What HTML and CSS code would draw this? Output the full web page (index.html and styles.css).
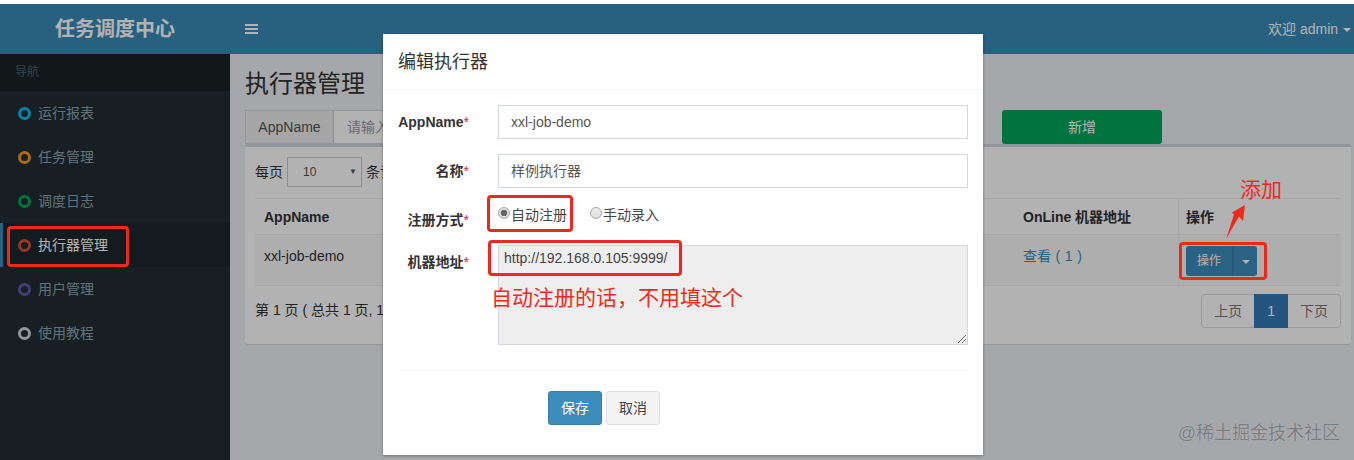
FILE: index.html
```html
<!DOCTYPE html>
<html lang="zh-CN">
<head>
<meta charset="utf-8">
<title>执行器管理</title>
<link rel="stylesheet" href="styles.css">
</head>
<body>
<div class="app">
  <header class="topbar">
    <div class="logo">任务调度中心</div>
    <div class="nav">
      <span class="burger"><i></i><i></i><i></i></span>
      <span class="user">欢迎 admin <b class="caret"></b></span>
    </div>
  </header>
  <div class="main">
    <aside class="side">
      <div class="side-head">导航</div>
      <ul class="menu">
        <li><span class="ring r-blue"></span>运行报表</li>
        <li><span class="ring r-orange"></span>任务管理</li>
        <li><span class="ring r-green"></span>调度日志</li>
        <li class="on"><span class="ring r-red"></span>执行器管理</li>
        <li><span class="ring r-purple"></span>用户管理</li>
        <li><span class="ring r-gray"></span>使用教程</li>
      </ul>
    </aside>
    <main class="content">
      <h1>执行器管理</h1>
      <div class="filter">
        <div class="group"><span class="addon">AppName</span><span class="ph">请输入</span></div>
        <span class="add">新增</span>
      </div>
      <section class="box">
        <div class="len">每页 <span class="sel">10<b>▼</b></span> 条记录</div>
        <div class="table">
          <div class="tr th"><span class="c1">AppName</span><span class="c2">OnLine 机器地址</span><span class="c3">操作</span></div>
          <div class="tr td"><span class="c1">xxl-job-demo</span><span class="c2 link">查看 ( 1 )</span><span class="c3"><span class="split"><span>操作</span><span class="drop"><b class="caret"></b></span></span></span></div>
        </div>
        <div class="foot">
          <span>第 1 页 ( 总共 1 页, 1 条记录 )</span>
          <span class="pager"><span>上页</span><span class="cur">1</span><span>下页</span></span>
        </div>
      </section>
    </main>
  </div>
</div>

<div class="shade"></div>

<div class="modal">
  <div class="m-head">编辑执行器</div>
  <div class="m-body">
    <div class="row"><label>AppName<em>*</em></label><div class="input">xxl-job-demo</div></div>
    <div class="row"><label>名称<em>*</em></label><div class="input">样例执行器</div></div>
    <div class="row radios"><label>注册方式<em>*</em></label>
      <div class="opts"><span class="opt"><span class="radio checked"></span>自动注册</span><span class="opt"><span class="radio"></span>手动录入</span></div>
    </div>
    <div class="row"><label>机器地址<em>*</em></label><div class="area">http://192.168.0.105:9999/<svg class="grip" width="10" height="10" viewBox="0 0 10 10"><path d="M1 9 L9 1 M5 9 L9 5" stroke="#777" stroke-width="1" fill="none"/></svg></div></div>
  </div>
  <div class="m-foot"><span class="btn save">保存</span><span class="btn cancel">取消</span></div>
</div>

<div class="mark m-menu"></div>
<div class="mark m-radio"></div>
<div class="mark m-addr"></div>
<div class="mark m-op"></div>
<div class="note n-auto">自动注册的话，不用填这个</div>
<div class="note n-add">添加</div>
<svg class="arrow" width="26" height="38" viewBox="0 0 26 38"><path d="M21 2 L19 18 L15 13.5 L2 36 L10 11.5 L8 9.5 Z" fill="#ee2a1e"/></svg>
<div class="wm">@稀土掘金技术社区</div>
</body>
</html>
```
FILE: styles.css
```css
* { box-sizing: border-box; }
html, body { margin: 0; height: 100%; }
body {
  width: 1354px; height: 460px; overflow: hidden; position: relative; background: #fff;
  font: 14px/20px "Liberation Sans", "Noto Sans CJK SC", sans-serif; color: #333;
}
ul { list-style: none; margin: 0; padding: 0; }
.app { height: 460px; padding-top: 4px; display: flex; flex-direction: column; }
.topbar { height: 50px; display: flex; flex: none; }
.logo {
  width: 230px; color: #fff; text-align: center;
  font-size: 20px; font-weight: 700; line-height: 50px; background: #3a8ab8;
}
.nav { flex: 1; background: #3a8ab8; display: flex; justify-content: space-between; align-items: center; padding: 0 3px 0 15px; color: #fff; }
.burger { display: flex; flex-direction: column; gap: 2px; width: 13px; }
.burger i { height: 2px; background: #fff; display: block; }
.user { font-size: 14px; margin-right: 0; }
.caret { display: inline-block; border-top: 4px solid; border-left: 4px solid transparent; border-right: 4px solid transparent; vertical-align: middle; margin-left: 1px; }
.main { flex: 1; display: flex; min-height: 0; }
.side { width: 230px; flex: none; background: #222d32; color: #b8c7ce; }
.side-head { height: 37px; background: #1a2226; color: #4b646f; font-size: 12px; line-height: 36px; padding-left: 15px; }
.menu li { height: 44px; display: flex; align-items: center; padding-left: 18px; color: #8aa4af; position: relative; }
.menu li.on { color: #fff; background: #1e282c; }
.menu li.on::before { content: ""; position: absolute; left: 0; top: 0; bottom: 0; width: 3px; background: #3c8dbc; }
.ring { width: 13px; height: 13px; border-radius: 50%; border: 3px solid; margin-right: 7px; }
.r-blue { color: #00c0ef; } .r-orange { color: #f39c12; } .r-green { color: #00a65a; }
.r-red { color: #dd4b39; } .r-purple { color: #605ca8; } .r-gray { color: #d2d6de; }
.content { flex: 1; background: #ecf0f5; padding: 15px 3px 0 15px; min-width: 0; }
h1 { margin: 0; font-size: 24px; font-weight: 400; line-height: 30px; }
.filter { display: flex; justify-content: space-between; margin-top: 11px; height: 34px; padding-right: 189px; }
.group { display: flex; width: 300px; height: 34px; border: 1px solid #d2d6de; background: #fff; }
.addon { width: 88px; background: #eee; border-right: 1px solid #ccc; text-align: center; line-height: 32px; color: #555; }
.ph { padding-left: 13px; line-height: 32px; color: #999; }
.add { width: 160px; height: 34px; background: #00a65a; color: #fff; text-align: center; line-height: 34px; border-radius: 3px; }
.box { height: 200px; background: #fff; border-top: 3px solid #d2d6de; border-radius: 3px; padding: 10px 10px 0; box-shadow: 0 1px 1px rgba(0,0,0,.1); }
.len { display: flex; align-items: center; gap: 4px; height: 30px; }
.sel { width: 75px; height: 30px; border: 1px solid #ccc; line-height: 28px; padding: 0 4px 0 15px; font-size: 12px; display: flex; justify-content: space-between; color: #555; }
.sel b { font-size: 8px; font-weight: 400; }
.table { margin-top: 11px; }
.tr { display: flex; }
.th { height: 37px; border-top: 1px solid #eee; border-bottom: 1px solid #eee; font-weight: 700; line-height: 37px; background: #fff; }
.td { height: 51px; background: #f9f9f9; border-bottom: 1px solid #eee; line-height: 42px; }
.c1 { width: 759px; padding-left: 9px; }
.c2 { width: 164px; padding-left: 9px; }
.c3 { flex: 1; padding-left: 7px; border-left: 1px solid #f4f4f4; }
.link { color: #3c8dbc; word-spacing: .7px; }
.split { display: inline-flex; height: 30px; margin-top: 11px; width: 71px; background: #3c8dbc; border-radius: 3px; color: #fff; font-size: 12px; line-height: 30px; vertical-align: top; }
.split > span:first-child { width: 46px; text-align: center; }
.drop { flex: 1; border-left: 1px solid #367fa9; text-align: center; }
.foot { display: flex; justify-content: space-between; padding-top: 8px; }
.foot > span:first-child { line-height: 32px; }
.pager { display: flex; height: 34px; border: 1px solid #ddd; border-radius: 4px; background: #fff; line-height: 32px; color: #777; }
.pager span { padding: 0 12px; }
.pager .cur { background: #337ab7; color: #fff; padding: 0 13px; margin: -1px 0; line-height: 34px; }
.shade { position: absolute; inset: 4px 0 0 0; background: rgba(0,0,0,.3); }
.modal { position: absolute; left: 383px; top: 34px; width: 600px; height: 421px; background: #fff; box-shadow: 0 1px 3px rgba(0,0,0,.3); }
.m-head { height: 56px; border-bottom: 1px solid #f4f4f4; padding-left: 15px; font-size: 18px; line-height: 56px; color: #333; }
.m-body { padding: 15px 15px 0; display: flex; flex-direction: column; gap: 15px; }
.row { display: flex; }
.row label { width: 71px; text-align: right; font-weight: 700; line-height: 34px; flex: none; white-space: nowrap; }
.row label em { color: #c7254e; font-style: normal; font-weight: 400; }
.input { margin-left: 29px; width: 470px; height: 34px; border: 1px solid #d2d6de; padding-left: 12px; line-height: 32px; color: #555; }
.radios { height: 27px; }
.opts { margin-left: 29px; display: flex; gap: 23px; height: 24px; }
.opt { display: flex; align-items: center; height: 24px; color: #444; }
.radio { width: 12px; height: 12px; border-radius: 50%; border: 1px solid #aaa; background: linear-gradient(#eee, #ddd); margin-right: 1px; position: relative; top: -2px; }
.checked { background: radial-gradient(circle, #666 0 3px, #ddd 3.5px); }
.area { margin-left: 29px; width: 470px; height: 100px; background: #eee; border: 1px solid #d2d6de; padding: 2px 5px; color: #444; position: relative; }
.grip { position: absolute; right: 0; bottom: 0; }
.m-foot { margin: 25px 15px 0; border-top: 1px solid #f4f4f4; padding: 20px 0 0 150px; display: flex; gap: 4px; }
.btn { width: 54px; height: 34px; text-align: center; line-height: 32px; border-radius: 3px; border: 1px solid; }
.save { background: #3c8dbc; border-color: #367fa9; color: #fff; }
.cancel { background: #f4f4f4; border-color: #ddd; color: #444; }
.mark { position: absolute; border: 3px solid #e92a1e; border-radius: 4px; }
.m-menu { left: 7px; top: 226px; width: 122px; height: 41px; }
.m-radio { left: 487px; top: 195px; width: 86px; height: 37px; }
.m-addr { left: 488px; top: 240px; width: 194px; height: 36px; }
.m-op { left: 1179px; top: 242px; width: 88px; height: 38px; }
.note { position: absolute; color: #ee2a1e; font-size: 21px; line-height: 24px; white-space: nowrap; }
.n-auto { left: 491px; top: 286px; }
.n-add { left: 1240px; top: 178px; }
.arrow { position: absolute; left: 1224px; top: 203px; }
.wm { position: absolute; right: 14px; top: 422px; color: #7a7d80; font-size: 18px; line-height: 22px; text-shadow: 0 0 1px #ccc; }
```
